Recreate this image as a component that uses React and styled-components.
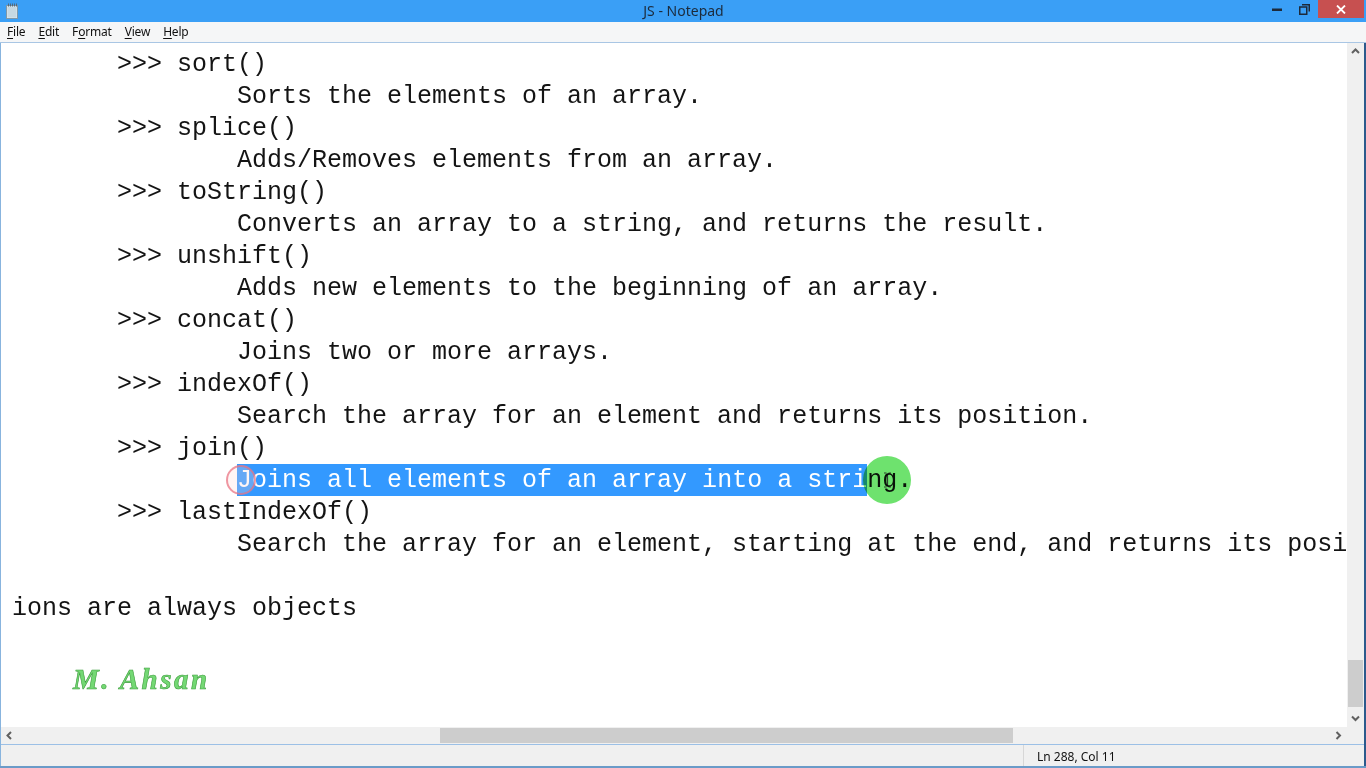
import React from 'react';
import styled, { createGlobalStyle } from 'styled-components';

const GlobalStyle = createGlobalStyle`
  html, body {
    margin: 0;
    padding: 0;
    width: 1366px;
    height: 768px;
    overflow: hidden;
    background: #ffffff;
  }
`;

const Window = styled.div`
  width: 1366px;
  height: 768px;
  display: flex;
  flex-direction: column;
  background: #f0f0f0;
  font-family: 'Noto Sans', 'Open Sans', sans-serif;
`;

const TitleBar = styled.div`
  height: 22px;
  flex: 0 0 22px;
  background: #3a9ff6;
  display: flex;
  align-items: center;
`;

const AppIcon = styled.div`
  width: 22px;
  display: flex;
  justify-content: center;
  padding-left: 1px;
`;

const Title = styled.div`
  flex: 1;
  text-align: center;
  font-size: 14px;
  color: #1c2b3c;
  line-height: 22px;
  padding-left: 82px;
`;

const Controls = styled.div`
  display: flex;
  align-self: flex-start;
  height: 18px;
  padding-right: 2px;
`;

const CtrlButton = styled.div`
  width: ${(p) => p.w}px;
  height: 18px;
  display: flex;
  align-items: center;
  justify-content: center;
  background: ${(p) => p.bg || 'transparent'};
`;

const MenuBar = styled.div`
  height: 20px;
  flex: 0 0 20px;
  background: #f5f6f7;
  display: flex;
  align-items: center;
  border-bottom: 1px solid #a9c6e4;
`;

const MenuItem = styled.div`
  font-size: 12px;
  letter-spacing: -0.2px;
  color: #111;
  padding: 0 6px 0 7px;
  line-height: 20px;
  u {
    text-decoration: underline;
    text-underline-offset: 2px;
  }
`;

const Body = styled.div`
  flex: 1;
  display: flex;
  flex-direction: column;
  border-left: 1px solid #88b4de;
  border-right: 2px solid #2c5a8c;
  min-height: 0;
`;

const EditRow = styled.div`
  flex: 1;
  display: flex;
  min-height: 0;
`;

const TextArea = styled.div`
  flex: 1;
  background: #ffffff;
  overflow: hidden;
  padding: 5px 0 0 11px;
  font-family: 'Liberation Mono', 'DejaVu Sans Mono', monospace;
  font-size: 25px;
  color: #141414;
`;

const Line = styled.div`
  height: 32px;
  line-height: 33px;
  white-space: pre;
  position: relative;
`;

const Selected = styled.span`
  display: inline-block;
  height: 32px;
  background: #3399ff;
  color: #ffffff;
`;

const ClickRing = styled.div`
  position: absolute;
  left: ${(p) => p.x}px;
  top: ${(p) => p.y}px;
  width: ${(p) => p.d}px;
  height: ${(p) => p.d}px;
  border-radius: 50%;
  box-sizing: border-box;
  border: ${(p) => (p.ring ? '2px solid rgba(232, 110, 125, 0.7)' : 'none')};
  background: ${(p) => p.fill};
  mix-blend-mode: ${(p) => (p.ring ? 'normal' : 'multiply')};
  display: flex;
  align-items: center;
  justify-content: center;
`;

const Watermark = styled.div`
  position: absolute;
  left: 73px;
  top: 663px;
  font-family: 'Liberation Serif', serif;
  font-style: italic;
  font-weight: bold;
  font-size: 29px;
  letter-spacing: 2.5px;
  color: #74d874;
  -webkit-text-stroke: 0.6px #3e9e3e;
`;

const VScroll = styled.div`
  width: 17px;
  background: #f0f0f0;
  display: flex;
  flex-direction: column;
  align-items: center;
`;

const Arrow = styled.div`
  width: 17px;
  height: 17px;
  display: flex;
  align-items: center;
  justify-content: center;
`;

const VTrack = styled.div`
  flex: 1;
  width: 17px;
  display: flex;
  flex-direction: column;
  justify-content: flex-end;
  align-items: center;
`;

const VThumb = styled.div`
  width: 15px;
  height: 47px;
  background: #cdcdcd;
  margin-bottom: 3px;
`;

const HScrollRow = styled.div`
  height: 17px;
  flex: 0 0 17px;
  display: flex;
  background: #f0f0f0;
  border-bottom: 1px solid #9cc0e6;
`;

const HTrack = styled.div`
  flex: 1;
  display: flex;
  align-items: center;
  padding-left: 422px;
`;

const HThumb = styled.div`
  width: 573px;
  height: 15px;
  background: #cdcdcd;
`;

const Corner = styled.div`
  width: 17px;
  background: #f0f0f0;
`;

const StatusBar = styled.div`
  height: 21px;
  flex: 0 0 21px;
  background: #f0f0f0;
  display: flex;
  justify-content: flex-end;
`;

const StatusCell = styled.div`
  width: 341px;
  border-left: 1px solid #d7d7d7;
  font-size: 12px;
  color: #111;
  line-height: 24px;
  padding-left: 13px;
  box-sizing: border-box;
`;

const BottomEdge = styled.div`
  height: 2px;
  flex: 0 0 2px;
  background: #6b9bc8;
`;

const lines = [
  '       >>> sort()',
  '               Sorts the elements of an array.',
  '       >>> splice()',
  '               Adds/Removes elements from an array.',
  '       >>> toString()',
  '               Converts an array to a string, and returns the result.',
  '       >>> unshift()',
  '               Adds new elements to the beginning of an array.',
  '       >>> concat()',
  '               Joins two or more arrays.',
  '       >>> indexOf()',
  '               Search the array for an element and returns its position.',
  '       >>> join()',
  null,
  '       >>> lastIndexOf()',
  '               Search the array for an element, starting at the end, and returns its posi',
  '',
  'ions are always objects',
  '',
  '',
];

function NotepadIcon() {
  return (
    <svg width="12" height="16" viewBox="0 0 12 16">
      <rect x="0.5" y="2.5" width="11" height="13" fill="#dfe9ef" stroke="#7f98a8" />
      <rect x="1.5" y="3.5" width="9" height="11" fill="#c6d8e2" />
      {[2, 4, 6, 8, 10].map((x) => (
        <rect key={x} x={x} y="0.5" width="1" height="3" fill="#55687a" />
      ))}
    </svg>
  );
}

function Chevron({ dir }) {
  const paths = {
    up: 'M1 5 L4.5 1.5 L8 5',
    down: 'M1 1.5 L4.5 5 L8 1.5',
    left: 'M5 1 L1.5 4.5 L5 8',
    right: 'M1.5 1 L5 4.5 L1.5 8',
  };
  const vertical = dir === 'up' || dir === 'down';
  return (
    <svg width={vertical ? 9 : 7} height={vertical ? 7 : 9} viewBox={vertical ? '0 0 9 7' : '0 0 7 9'}>
      <path d={paths[dir]} fill="none" stroke="#606060" strokeWidth="2" />
    </svg>
  );
}

function IBeam() {
  return (
    <svg width="9" height="16" viewBox="0 0 9 16">
      <path d="M1 1 H3.5 M5.5 1 H8 M4.5 2 V14 M1 15 H3.5 M5.5 15 H8" stroke="#2f3b2f" strokeWidth="1.2" fill="none" />
    </svg>
  );
}

export default function App() {
  return (
    <>
      <GlobalStyle />
      <Window>
        <TitleBar>
          <AppIcon>
            <NotepadIcon />
          </AppIcon>
          <Title>JS - Notepad</Title>
          <Controls>
            <CtrlButton w={29}>
              <svg width="10" height="3" viewBox="0 0 10 3">
                <rect width="10" height="2.5" y="0.5" fill="#1d2a3a" />
              </svg>
            </CtrlButton>
            <CtrlButton w={27}>
              <svg width="11" height="11" viewBox="0 0 11 11">
                <path d="M3 0.75 H10.25 V7.5 M0.75 3 H7.75 V10.25 H0.75 Z" fill="none" stroke="#1d2a3a" strokeWidth="1.5" />
              </svg>
            </CtrlButton>
            <CtrlButton w={46} bg="#c75050">
              <svg width="10" height="9" viewBox="0 0 10 9">
                <path d="M1 0.5 L9 8.5 M9 0.5 L1 8.5" stroke="#ffffff" strokeWidth="1.8" />
              </svg>
            </CtrlButton>
          </Controls>
        </TitleBar>

        <MenuBar>
          <MenuItem><u>F</u>ile</MenuItem>
          <MenuItem><u>E</u>dit</MenuItem>
          <MenuItem>F<u>o</u>rmat</MenuItem>
          <MenuItem><u>V</u>iew</MenuItem>
          <MenuItem><u>H</u>elp</MenuItem>
        </MenuBar>

        <Body>
          <EditRow>
            <TextArea>
              {lines.map((text, i) =>
                text === null ? (
                  <Line key={i}>
                    {'               '}
                    <Selected>Joins all elements of an array into a stri</Selected>
                    ng.
                    <ClickRing x={214} y={1} d={30} ring fill="rgba(255, 215, 215, 0.25)" />
                    <ClickRing x={851} y={-8} d={48} fill="rgba(110, 226, 110, 1)">
                      <IBeam />
                    </ClickRing>
                  </Line>
                ) : (
                  <Line key={i}>{text}</Line>
                )
              )}
            </TextArea>
            <VScroll>
              <Arrow>
                <Chevron dir="up" />
              </Arrow>
              <VTrack>
                <VThumb />
              </VTrack>
              <Arrow>
                <Chevron dir="down" />
              </Arrow>
            </VScroll>
          </EditRow>
          <HScrollRow>
            <Arrow>
              <Chevron dir="left" />
            </Arrow>
            <HTrack>
              <HThumb />
            </HTrack>
            <Arrow>
              <Chevron dir="right" />
            </Arrow>
            <Corner />
          </HScrollRow>
          <StatusBar>
            <StatusCell>Ln 288, Col 11</StatusCell>
          </StatusBar>
        </Body>
        <BottomEdge />
        <Watermark>M. Ahsan</Watermark>
      </Window>
    </>
  );
}
